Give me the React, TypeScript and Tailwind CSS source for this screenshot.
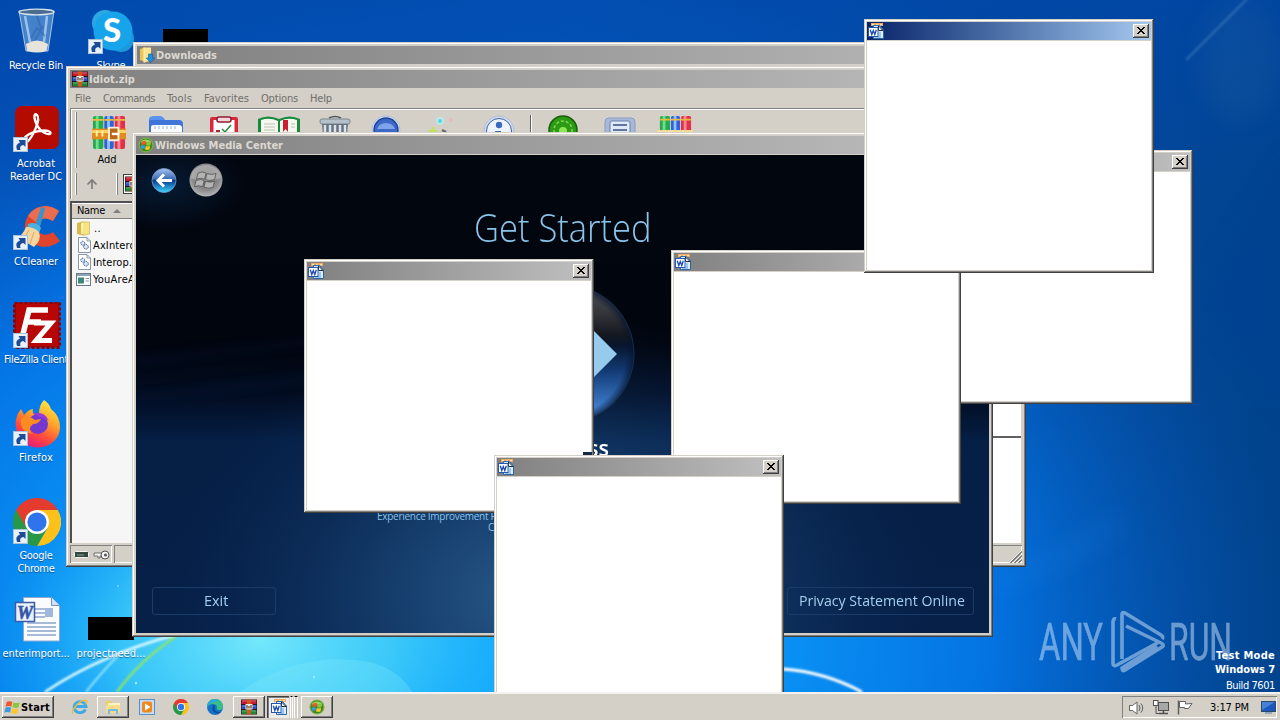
import React, { useLayoutEffect, useRef, useState } from "react";

type Box = { className?: string };

/* Text that is tracked so that it fills a given width. */
function Label({ w, className = "", children }: { w: number; className?: string; children: string }) {
  const ref = useRef<HTMLSpanElement>(null);
  const [spacing, setSpacing] = useState(0);
  useLayoutEffect(() => {
    const el = ref.current;
    if (el) setSpacing((w - el.getBoundingClientRect().width) / children.length);
  }, []);
  return (
    <span ref={ref} className={`inline-block shrink-0 whitespace-nowrap ${className}`} style={{ letterSpacing: spacing }}>
      {children}
    </span>
  );
}

/* Text whose glyphs are condensed to a given width. */
function Condensed({ w, className = "", children }: { w: number; className?: string; children: string }) {
  const ref = useRef<HTMLSpanElement>(null);
  const [scale, setScale] = useState(1);
  useLayoutEffect(() => {
    const el = ref.current;
    if (el) setScale(w / el.offsetWidth);
  }, []);
  return (
    <span className={`flex shrink-0 justify-start ${className}`} style={{ width: w }}>
      <span ref={ref} className="inline-block shrink-0 origin-left whitespace-nowrap" style={{ transform: `scaleX(${scale})` }}>
        {children}
      </span>
    </span>
  );
}

const frame =
  "bg-[#d4d0c8] shadow-[inset_-1px_-1px_#404040,inset_1px_1px_#d4d0c8,inset_-2px_-2px_#808080,inset_2px_2px_#fff]";
const raised = "bg-[#d4d0c8] shadow-[inset_-1px_-1px_#404040,inset_1px_1px_#fff,inset_-2px_-2px_#808080]";

/* ---------- small icons ---------- */

function WordSmall({ className = "h-4 w-4" }: Box) {
  return (
    <svg viewBox="0 0 16 16" className={className}>
      <rect x="3" y="0" width="12" height="3" fill="#f0a868" />
      <path d="M4 1.500h2M8 1.500h2M12 1.500h2" stroke="#ffe8b0" />
      <path d="M5.500 2.500h6l4 4.500v8.500h-10z" fill="#dcecfa" stroke="#2a66a8" />
      <path d="M10.500 3v4.500h4.500z" fill="#fff" stroke="#182838" strokeWidth="1" />
      <path d="M12 9v4M7 14h6" fill="none" stroke="#5aa0dc" />
      <rect x=".5" y="4.500" width="9.500" height="9" fill="#fff" stroke="#2458b4" />
      <path d="M2.300 6.800l1.500 4.700 1.500-4 1.500 4 1.500-4.700" fill="none" stroke="#1848b0" strokeWidth="1.300" />
    </svg>
  );
}

function WinRar({ className = "h-4 w-4" }: Box) {
  return (
    <svg viewBox="0 0 16 16" className={className}>
      <rect x="0" y="0.5" width="16" height="15" fill="#281414" />
      <rect x="0.5" y="1" width="15" height="4" fill="#c01c38" />
      <rect x="0.5" y="6" width="15" height="4" fill="#3450c0" />
      <rect x="0.5" y="11" width="15" height="4" fill="#1c8838" />
      <path d="M1 2h14M1 7h14M1 12h14" stroke="#fff" strokeOpacity=".3" />
      <rect x="6" y="0.5" width="4" height="15" fill="#d05818" />
      <rect x="4.500" y="5" width="7" height="5.500" fill="#f0e8dc" />
      <path d="M6 6v3.500M8 7v2.500M10 6v3.500" fill="none" stroke="#402010" />
    </svg>
  );
}

function FolderDown() {
  return (
    <svg viewBox="0 0 16 16" className="h-4 w-4">
      <path d="M1 2l4-1.500v14L1 13z" fill="#e9c456" />
      <path d="M5 .5h7v13l-7 2z" fill="#fbe391" />
      <path d="M5 .5v15" stroke="#fff6c8" />
      <path d="M9.500 7h4v4H16l-4.300 4.800L7.200 11h2.300z" fill="#1d8fe0" stroke="#0d5aa5" strokeWidth=".6" />
    </svg>
  );
}

function Flag({ x, y, s }: { x: number; y: number; s: number }) {
  return (
    <g transform={`translate(${x} ${y}) scale(${s})`}>
      <path d="M1 1.400C3 .4 5 .4 6.600 1.300L5.600 6C4 5.200 2 5.200 0 6z" fill="#f0552b" />
      <path d="M7.600 1.800c2 .9 4 .8 6.200 0L12.700 6.600c-2 .8-4 .7-6 0z" fill="#8cc63e" />
      <path d="M-.2 7c2-.9 4-.8 5.600.1L4.400 11.700c-2-.9-3.800-.8-5.700 0z" fill="#3b9ae0" />
      <path d="M6.400 7.600c2 .9 4 .8 6 0l-1 4.700c-2 .9-4 .7-6 0z" fill="#fcc52c" />
    </g>
  );
}

function MediaCenter({ className = "h-4 w-4" }: Box) {
  return (
    <svg viewBox="0 0 16 16" className={className}>
      <circle cx="8" cy="8" r="7.300" fill="#3c8a1c" />
      <circle cx="8" cy="8" r="7" fill="none" stroke="#8fbc58" />
      <path d="M2.500 5.500a6 5 0 0 1 11 0z" fill="#b9e27a" opacity=".8" />
      <Flag x={3.2} y={3.6} s={0.72} />
    </svg>
  );
}

function StartFlag() {
  return (
    <svg viewBox="0 0 16 15" className="h-[15px] w-4">
      <Flag x={1.6} y={0.6} s={1.02} />
    </svg>
  );
}

function ChromeLogo({ className = "" }: Box) {
  return (
    <svg viewBox="0 0 48 48" className={className}>
      <path d="M44.800 12H24v12l10.400 6L24 48a24 24 0 0 0 20.800-36z" fill="#fcc21b" />
      <path d="M3.200 12A24 24 0 0 0 24 48l10.400-18L24 24z" fill="#279847" />
      <path d="M3.200 12A24 24 0 0 1 44.800 12H24L13.600 30z" fill="#e33b2e" />
      <circle cx="24" cy="24" r="12" fill="#fff" />
      <circle cx="24" cy="24" r="9.600" fill="#2f74ea" />
    </svg>
  );
}

function Close() {
  return (
    <div className={`mr-0.5 flex h-3.5 w-4 items-center justify-center ${raised}`}>
      <svg viewBox="0 0 8 7" className="mb-px mr-px h-[7px] w-2" shapeRendering="crispEdges">
        <path d="M0 0h2v1h1v1h2v-1h1v-1h2v1h-1v1h-1v1h-1v1h1v1h1v1h1v1h-2v-1h-1v-1h-2v1h-1v1h-2v-1h1v-1h1v-1h1v-1h-1v-1h-1v-1h-1z" fill="#000" />
      </svg>
    </div>
  );
}

/* ---------- windows ---------- */

function Popup({ className, active = false }: { className: string; active?: boolean }) {
  return (
    <div className={`absolute flex h-[254px] w-[290px] flex-col gap-px p-[3px] ${frame} ${className}`}>
      <div
        className={`flex h-[18px] shrink-0 items-center justify-between pl-px ${
          active ? "bg-linear-to-r from-[#0a246a] to-[#a6caf0]" : "bg-linear-to-r from-[#808080] to-[#c0c0c0]"
        }`}
      >
        <WordSmall />
        <Close />
      </div>
      <div className="flex-1 bg-white" />
    </div>
  );
}

function TitleBar({ icon, title, w }: { icon: React.ReactNode; title: string; w: number }) {
  return (
    <div className="flex h-[18px] shrink-0 items-center gap-px bg-linear-to-r from-[#808080] to-[#c0c0c0] pl-0.5 text-[11px] font-bold leading-[14px] text-[#dcd8d0]">
      {icon}
      <Label w={w} className="pt-0.5">{title}</Label>
    </div>
  );
}

function Books({ className = "h-9 w-9", clasp = true }: Box & { clasp?: boolean }) {
  return (
    <svg viewBox="0 0 36 36" preserveAspectRatio="none" className={className}>
      <rect x="1" y="1" width="11" height="34" rx="2" fill="#28a850" />
      <rect x="4" y="1" width="3" height="34" fill="#6fe08a" />
      <rect x="13" y="1" width="10" height="34" rx="2" fill="#2d62d8" />
      <rect x="16" y="1" width="3" height="34" fill="#8fc0ff" />
      <rect x="24" y="1" width="11" height="34" rx="2" fill="#e0304c" />
      <rect x="27" y="1" width="3" height="34" fill="#ff8a90" />
      <path d="M1 5h11M13 5h10M24 5h11" stroke="#f0b83a" strokeWidth="2" />
      {clasp && (
        <g>
          <rect x="0" y="14" width="36" height="11" fill="#e08c20" />
          <path d="M0 17h36" stroke="#ffd060" strokeWidth="3" />
          <path d="M5 16v6M11 16v6" stroke="#fff0b0" strokeWidth="2" />
          <rect x="18" y="13" width="10" height="13" rx="1" fill="#b86818" stroke="#fff0d8" strokeWidth="2" />
          <path d="M21 19.500h8" stroke="#fff" strokeWidth="2.500" />
        </g>
      )}
    </svg>
  );
}

function Toolbar() {
  return (
    <div className="flex h-[62px] pl-1 pt-[3px]">
      <div className="h-14 w-0.5 border-l border-white bg-[#808080]" />
      <div className="ml-[14px] flex w-9 flex-col items-center pt-[3px] text-[11px] leading-[14px] text-black">
        <Books className="h-[35px] w-[34px] shrink-0" />
        <Label w={19} className="mr-1 mt-[3px]">Add</Label>
      </div>
      <div className="flex items-start pt-[3px]">
        <svg viewBox="0 0 38 20" className="ml-[20px] h-5 w-[38px]">
          <path d="M2 20V5q0-3 3-3h9l4 3h14q4 0 4 4v11z" fill="#3f74d8" />
          <path d="M2 5q0-4 5-4h6q3 0 5 4z" fill="#5a94f0" />
          <path d="M4 20V12q0-2 3-2h25q3 0 3 3v7z" fill="#f8fbff" />
          <path d="M8 11v3M12 11v3M16 11v3M20 11v3M24 11v3M28 11v3" stroke="#9ab0d8" />
        </svg>
        <svg viewBox="0 0 30 20" className="ml-6 h-5 w-[30px]">
          <rect x="1" y="2" width="28" height="26" rx="2" fill="#d8283c" />
          <rect x="4.500" y="5" width="21" height="20" fill="#fff" />
          <rect x="8" y="2" width="14" height="5" rx="2" fill="#f0d8dc" stroke="#8e1c2a" strokeWidth="1.500" />
          <path d="M13 14l3 3 6-7" fill="none" stroke="#1a8a3a" strokeWidth="1.500" />
          <path d="M7 16h4" stroke="#a02a2a" strokeWidth="2" />
        </svg>
        <svg viewBox="0 0 42 20" className="ml-[19px] h-5 w-[42px]">
          <path d="M0 20V4q10-5 21 0 11-5 21 0v16z" fill="#188a3c" />
          <path d="M3 20V5q9-3 17 1v14zM22 20V6q8-4 17-1v15z" fill="#f6f8f0" />
          <path d="M6 9h11M6 12h11M6 15h11M33 9h4M33 12h4" stroke="#b8c4b0" />
          <path d="M25 5h5v12l-2.500-3-2.500 3z" fill="#c82030" />
        </svg>
        <svg viewBox="0 0 32 20" className="ml-[19px] h-5 w-8">
          <path d="M10 3q6-3 12 0" fill="none" stroke="#4a545e" strokeWidth="1.500" />
          <rect x="1" y="4" width="30" height="5" rx="2" fill="#b4c0ca" stroke="#7a8690" />
          <path d="M3 9h26l-1 11H4z" fill="#667280" />
          <path d="M6 10v10M11 10v10M16 10v10M21 10v10M26 10v10" stroke="#dce4ea" strokeWidth="2.500" />
        </svg>
        <svg viewBox="0 0 30 20" className="ml-[20px] h-5 w-[30px]">
          <circle cx="15" cy="15" r="14" fill="#eef3fc" stroke="#a8b8d8" />
          <circle cx="15" cy="15" r="12" fill="#3c68c8" stroke="#1c4296" strokeWidth="1.500" />
          <path d="M6 14a9.500 9 0 0 1 18 0z" fill="#7ea4ec" />
        </svg>
        <svg viewBox="0 0 30 20" className="ml-[26px] h-5 w-[30px]">
          <circle cx="13" cy="6" r="4" fill="#b8e8ec" />
          <circle cx="13" cy="6" r="2" fill="#58d4e4" />
          <path d="M24 3v4M22 5h4" stroke="#f0b0c0" strokeWidth="1.500" />
          <path d="M6 12v8M2 16h8" stroke="#c4e060" strokeWidth="2.500" />
          <path d="M15 15l4 2" stroke="#686868" strokeWidth="2.500" />
        </svg>
        <svg viewBox="0 0 32 20" className="ml-[26px] h-5 w-8">
          <circle cx="16" cy="16" r="15" fill="#cfdcf0" stroke="#b0bfd8" />
          <circle cx="16" cy="16" r="12.500" fill="#eef4fe" stroke="#4460a0" />
          <circle cx="16" cy="10" r="3.200" fill="#3c68c0" />
          <path d="M12 16h6v4h-5" fill="#3c68c0" />
        </svg>
        <div className="ml-[15px] h-5 w-0.5 border-l border-[#606060] bg-white" />
        <svg viewBox="0 0 30 20" className="ml-4 h-5 w-[30px]">
          <circle cx="15" cy="15" r="14" fill="#2c9a14" stroke="#14600a" strokeWidth="1.500" />
          <circle cx="15" cy="15" r="9" fill="none" stroke="#7cd850" strokeWidth="1.500" strokeDasharray="3 2" />
          <circle cx="15" cy="16" r="4" fill="#8ee850" />
        </svg>
        <svg viewBox="0 0 32 20" className="ml-[26px] h-5 w-8">
          <rect x="1" y="3" width="30" height="26" rx="4" fill="#a8b8d8" stroke="#8c9cc0" />
          <rect x="6" y="6" width="20" height="20" rx="2" fill="#dfe9fa" stroke="#6880b0" />
          <path d="M9 10h14M9 15h14" stroke="#38507c" strokeWidth="1.500" />
        </svg>
        <div className="relative ml-[21px] flex h-5 w-9 flex-col items-center overflow-hidden">
          <Books className="h-[33px] w-[33px] shrink-0" clasp={false} />
          <div className="absolute inset-x-0 bottom-0 h-[5px] bg-[#f4dc9c]" />
        </div>
      </div>
    </div>
  );
}

function Gear() {
  return (
    <svg viewBox="0 0 13 16" className="h-4 w-[13px]">
      <path d="M.5.5h8.500l3.500 3.500v11.500H.5z" fill="#fff" stroke="#8898a8" />
      <path d="M9 .5v3.500h3.500" fill="none" stroke="#8898a8" />
      <circle cx="4.800" cy="6.200" r="2" fill="#d8e8f8" stroke="#305088" strokeDasharray="1.300 .6" />
      <circle cx="8" cy="9.800" r="2.300" fill="#d8e8f8" stroke="#305088" strokeDasharray="1.300 .6" />
    </svg>
  );
}

function ArchiveWindow() {
  const menu: [string, number][] = [["File", 16], ["Commands", 52], ["Tools", 25], ["Favorites", 45], ["Options", 37], ["Help", 22]];
  return (
    <div className={`absolute left-[66px] top-[66px] flex h-[501px] w-[960px] flex-col p-1 ${frame}`}>
      <TitleBar icon={<WinRar />} title="Idiot.zip" w={46} />
      <div className="flex h-5 shrink-0 items-center gap-3 pl-[5px] pt-0.5 text-[11px] text-[#706e6a]">
        {menu.map(([t, w]) => (
          <Label key={t} w={w}>{t}</Label>
        ))}
      </div>
      <div className="flex h-[91px] shrink-0 flex-col border-l border-t border-[#808080] shadow-[inset_1px_1px_#fff]">
        <Toolbar />
        <div className="flex h-[26px] items-center pl-1">
          <div className="h-[22px] w-0.5 border-l border-white bg-[#808080]" />
          <svg viewBox="0 0 12 12" className="ml-[9px] h-3 w-3">
            <path d="M6 11V2M1.500 6.500L6 2l4.500 4.500" fill="none" stroke="#7c7a76" strokeWidth="1.600" />
          </svg>
          <div className="ml-[18px] h-[22px] w-0.5 border-l border-white bg-[#808080]" />
          <div className="ml-[5px] flex h-5 w-6 items-center border border-[#404040] bg-white pl-px"><WinRar /></div>
        </div>
      </div>
      <div className="mt-0.5 flex h-[342px] shrink-0 border-l-2 border-t-2 border-[#505050]">
        <div className="w-[900px] bg-[#f6f6f6] text-[11px] text-black">
          <div className="flex h-4 items-center border-b border-[#808080] bg-[#d4d0c8] pl-[5px] pt-0.5 shadow-[inset_0_1px_#fff]">
            <Label w={28}>Name</Label>
            <svg viewBox="0 0 8 4" className="mb-0.5 ml-2 h-1 w-2"><path d="M0 4l4-4 4 4z" fill="#808080" /></svg>
          </div>
          <div className="flex h-[17px] items-center gap-1 pl-[5px] pt-px">
            <svg viewBox="0 0 13 15" className="h-[15px] w-[13px]">
              <path d="M0 2l6-1.500v14L0 13z" fill="#d8b848" /><path d="M4 1h8.500v12L6 14.500z" fill="#f6e480" stroke="#c8a840" strokeWidth=".6" /><path d="M5 2v11" stroke="#fffbd0" strokeWidth="1.500" />
            </svg>
            <Label w={7} className="pt-0.5">..</Label>
          </div>
          <div className="flex h-[17px] items-center gap-0.5 pl-1.5 pt-px"><Gear /><Label w={49} className="pt-0.5">AxInterop</Label></div>
          <div className="flex h-[17px] items-center gap-0.5 pl-1.5 pt-px"><Gear /><Label w={39} className="pt-0.5">Interop.</Label></div>
          <div className="flex h-[17px] items-center gap-0.5 pl-1 pt-px">
            <svg viewBox="0 0 15 13" className="h-[13px] w-[15px]">
              <rect x=".5" y=".5" width="14" height="12" fill="#fff" stroke="#68788c" /><path d="M1 2h13" stroke="#90a4b8" strokeWidth="2" /><rect x="2" y="4.500" width="6" height="6" fill="#3c8878" /><path d="M9.500 5.500h3.500M9.500 8h3.500" stroke="#8098a8" />
            </svg>
            <Label w={42} className="pt-0.5">YouAreA</Label>
          </div>
        </div>
        <div className="flex flex-1 flex-col bg-white pt-[233px]">
          <div className="h-0.5 bg-[#606060]" />
        </div>
        <div className="w-px bg-[#d4d0c8]" />
      </div>
      <div className="mt-0.5 flex flex-1 gap-0.5 text-[#808080]">
        <div className="flex w-[42px] items-center gap-1 border-l border-t border-[#808080] pl-[3px] shadow-[inset_-1px_-1px_#fff]">
          <svg viewBox="0 0 15 7" className="h-[7px] w-[15px]"><rect x=".5" y=".5" width="14" height="6" rx="1" fill="#354840" stroke="#f4f4f4" /><path d="M3 4h7" stroke="#8fa098" /></svg>
          <svg viewBox="0 0 17 10" className="h-2.5 w-[17px]"><path d="M1 3h9v3H7v2H5V6H1z" fill="#f4f4f4" stroke="#606060" strokeWidth=".9" /><circle cx="12" cy="5" r="4" fill="#f4f4f4" stroke="#505050" /><circle cx="12.500" cy="5" r="1.500" fill="#505050" /></svg>
        </div>
        <div className="flex flex-1 items-end justify-end border-l border-t border-[#808080] shadow-[inset_-1px_-1px_#fff]">
          <svg viewBox="0 0 13 13" className="h-[13px] w-[13px]"><path d="M0 13L13 0M4 13l9-9M8 13l5-5" stroke="#fff" /><path d="M1.500 13L13 1.500M5.500 13L13 5.500M9.500 13L13 9.500" stroke="#707070" strokeWidth="1.300" /></svg>
        </div>
      </div>
    </div>
  );
}

function MediaWindow() {
  return (
    <div className={`absolute left-[132px] top-[132px] flex h-[505px] w-[861px] flex-col gap-px p-1 ${frame}`}>
      <TitleBar icon={<MediaCenter />} title="Windows Media Center" w={128} />
      <div className="relative flex flex-1 flex-col overflow-hidden bg-[#01050f] font-['Open_Sans',sans-serif] text-[#8ac4ea]">
        <svg viewBox="0 0 853 478" preserveAspectRatio="none" className="absolute inset-0 h-full w-full">
          <defs>
            <linearGradient id="mc" x1="0" y1="0" x2="0" y2="1">
              <stop offset="0" stopColor="#02060f" />
              <stop offset=".4" stopColor="#01050e" />
              <stop offset=".5" stopColor="#020c20" />
              <stop offset=".6" stopColor="#051f45" />
              <stop offset="1" stopColor="#062048" />
            </linearGradient>
            <radialGradient id="mg" gradientUnits="userSpaceOnUse" cx="0" cy="0" r="1" gradientTransform="translate(415 440) scale(390 280)">
              <stop offset="0" stopColor="#2e6290" stopOpacity=".95" />
              <stop offset=".4" stopColor="#205286" stopOpacity=".6" />
              <stop offset="1" stopColor="#0c2c5c" stopOpacity="0" />
            </radialGradient>
            <radialGradient id="mt" gradientUnits="userSpaceOnUse" cx="0" cy="0" r="1" gradientTransform="translate(30 30) scale(80 45)">
              <stop offset="0" stopColor="#0b3058" stopOpacity=".5" />
              <stop offset="1" stopColor="#0b3058" stopOpacity="0" />
            </radialGradient>
            <filter id="mb"><feGaussianBlur stdDeviation="5" /></filter>
          </defs>
          <rect width="853" height="478" fill="url(#mc)" />
          <rect width="853" height="478" fill="url(#mg)" />
          <rect width="853" height="478" fill="url(#mt)" />
          <path d="M0 206L180 186M0 244L180 222" stroke="#0a2450" strokeWidth="8" opacity=".2" filter="url(#mb)" />
        </svg>
        <div className="relative flex h-[51px] items-center gap-3 pl-[15px]">
          <svg viewBox="0 0 26 26" className="h-[26px] w-[26px]">
            <defs>
              <linearGradient id="bk" x1="0" y1="0" x2="0" y2="1">
                <stop offset="0" stopColor="#a4c4ee" /><stop offset=".45" stopColor="#3868b4" /><stop offset=".5" stopColor="#0c3890" /><stop offset="1" stopColor="#38d8ff" />
              </linearGradient>
            </defs>
            <circle cx="13" cy="12.500" r="12" fill="url(#bk)" stroke="#7898c8" strokeWidth=".8" />
            <path d="M21 12.500H8M13 6.500L7 12.500l6 6" fill="none" stroke="#fff" strokeWidth="3" />
          </svg>
          <svg viewBox="0 0 34 34" className="mb-0.5 h-[34px] w-[34px]">
            <defs>
              <radialGradient id="orb" cx=".5" cy=".4" r=".6">
                <stop offset="0" stopColor="#6c6c6c" /><stop offset=".7" stopColor="#8c8c8c" /><stop offset="1" stopColor="#b8b8b8" />
              </radialGradient>
            </defs>
            <circle cx="17" cy="17" r="16.500" fill="url(#orb)" />
            <path d="M2 15a15 13 0 0 1 30 0q-15 6-30 0z" fill="#c8c8c8" opacity=".5" />
            <g fill="#b4b4b4" stroke="#484848" strokeWidth=".7">
              <path d="M9 10q4-2 8 0l-1.500 6.200q-4-2-8 0zM18 10.500q4.500 2 9 0l-1.500 6q-4.500 2-9 0zM7 17.500q4.500-2 8.200 0l-1.500 6.200q-4-2-8.200 0zM16.500 18.200q4.500 2 9 0l-1.500 6q-4 2-9 0z" />
            </g>
          </svg>
        </div>
        <div className="relative flex h-[44px] items-center justify-center pb-[3px] text-[38px] font-light leading-[44px]">
          <Condensed w={178}>Get Started</Condensed>
        </div>
        <div className="relative mt-[34px] flex justify-center pl-1">
          <svg viewBox="0 0 140 140" className="h-[140px] w-[140px]">
            <defs>
              <linearGradient id="pl" x1="0" y1="0" x2="0" y2="1">
                <stop offset="0" stopColor="#50525a" /><stop offset=".2" stopColor="#34363c" /><stop offset=".36" stopColor="#15181f" /><stop offset=".44" stopColor="#07162f" /><stop offset=".62" stopColor="#123a74" /><stop offset=".9" stopColor="#4080d0" />
              </linearGradient>
              <radialGradient id="pe" cx=".5" cy=".5" r=".5">
                <stop offset=".88" stopColor="#06142c" stopOpacity="0" /><stop offset="1" stopColor="#06142c" stopOpacity=".7" />
              </radialGradient>
            </defs>
            <circle cx="70" cy="70" r="69" fill="url(#pl)" />
            <circle cx="70" cy="70" r="69" fill="url(#pe)" stroke="#142c50" />
            <path d="M74 22l48 48-48 48z" fill="#96cbee" />
          </svg>
        </div>
        <div className="relative mt-[10px] flex h-7 justify-end pr-[380px] text-[21px] font-semibold leading-7 text-white">
          <Condensed w={80}>Express</Condensed>
        </div>
        <div className="relative mt-[49px] flex flex-col items-start pl-[241px] text-[10px] leading-[11px]">
          <Label w={152}>Experience Improvement Program</Label>
          <span className="pl-[111px]">Customer</span>
        </div>
        <div className="relative mb-[18px] mt-auto flex items-center justify-between pl-4 pr-[15px] text-[15px] text-[#a4cfee]">
          <div className="flex h-7 w-[124px] items-center justify-center rounded-[3px] border border-[#1b3c68] pb-0.5 pl-1">
            <Condensed w={24}>Exit</Condensed>
          </div>
          <div className="flex h-7 w-[187px] items-center justify-center rounded-[3px] border border-[#1b3c68] pb-0.5 pl-[3px]">
            <Condensed w={166}>Privacy Statement Online</Condensed>
          </div>
        </div>
      </div>
    </div>
  );
}

/* ---------- desktop ---------- */

function Shortcut() {
  return (
    <svg viewBox="0 0 15 15" className="absolute bottom-0.5 left-0 h-[15px] w-[15px]">
      <rect x=".5" y=".5" width="14" height="14" fill="#e8f1fa" stroke="#a8c0d8" />
      <path d="M4 13Q1.500 7.500 7 5.500L5.500 3H12.500V10L10.500 8Q6 8.500 7.500 13z" fill="#1c4c98" />
    </svg>
  );
}

function DesktopIcon({ lines, art, shortcut = true }: { lines: [string, number][]; art: React.ReactNode; shortcut?: boolean }) {
  return (
    <div className="flex h-[98px] w-[75px] shrink-0 flex-col items-center gap-[3px] pt-2 text-[11px] leading-[13px] text-white">
      <div className="relative flex h-12 w-12 shrink-0 items-center justify-center">
        {art}
        {shortcut && <Shortcut />}
      </div>
      <div className="-ml-px flex flex-col items-center [text-shadow:0_1px_1px_rgba(0,40,90,.6)]">
        {lines.map(([t, w]) => <Label key={t} w={w}>{t}</Label>)}
      </div>
    </div>
  );
}

function Wallpaper() {
  return (
    <svg viewBox="0 0 1280 692" className="absolute inset-0 h-full w-full">
      <defs>
        <linearGradient id="wb" x1="0" y1="0" x2="1" y2="0">
          <stop offset="0" stopColor="#0450b8" /><stop offset=".45" stopColor="#0660c8" /><stop offset=".75" stopColor="#044ea6" /><stop offset="1" stopColor="#01438c" />
        </linearGradient>
        <linearGradient id="wt" x1="0" y1="0" x2="0" y2="1">
          <stop offset="0" stopColor="#0046a8" stopOpacity=".7" /><stop offset="1" stopColor="#0046a8" stopOpacity="0" />
        </linearGradient>
        <radialGradient id="w1" gradientUnits="userSpaceOnUse" cx="0" cy="0" r="1" gradientTransform="translate(420 640) scale(870 640)">
          <stop offset="0" stopColor="#1cb4ff" /><stop offset=".3" stopColor="#0ca0fc" /><stop offset=".65" stopColor="#0478ea" stopOpacity=".9" /><stop offset="1" stopColor="#0454b4" stopOpacity="0" />
        </radialGradient>
        <radialGradient id="w2" gradientUnits="userSpaceOnUse" cx="0" cy="0" r="1" gradientTransform="translate(260 640) scale(270 190)">
          <stop offset="0" stopColor="#74e8fc" /><stop offset=".5" stopColor="#40ccf8" stopOpacity=".85" /><stop offset="1" stopColor="#18a8f8" stopOpacity="0" />
        </radialGradient>
        <filter id="soft" x="-20%" y="-20%" width="140%" height="140%"><feGaussianBlur stdDeviation="1.200" /></filter>
        <filter id="haze" x="-60%" y="-60%" width="220%" height="220%"><feGaussianBlur stdDeviation="12" /></filter>
      </defs>
      <rect width="1280" height="692" fill="url(#wb)" />
      <rect width="1280" height="692" fill="url(#w1)" />
      <rect width="1280" height="692" fill="url(#w2)" />
      <rect width="1280" height="220" fill="url(#wt)" />
      <path d="M1300 150L1200 300 1300 420z" fill="#003f94" opacity=".5" filter="url(#haze)" />
      <ellipse cx="1240" cy="60" rx="40" ry="60" fill="#2464a0" opacity=".25" filter="url(#haze)" />
      <path d="M1248 -2L1186 60" fill="none" stroke="#6c9cd0" strokeWidth="2" opacity=".4" filter="url(#soft)" />
      <path d="M992 582Q1070 560 1120 520" fill="none" stroke="#2c94f8" strokeWidth="12" opacity=".2" filter="url(#haze)" />
      <path d="M240 692Q300 650 370 662 400 670 412 692z" fill="#8cf0fc" opacity=".25" />
      <g fill="none" filter="url(#soft)">
        <path d="M45 692Q100 655 175 635" stroke="#e4fcff" strokeWidth="2.500" />
        <path d="M86 692Q105 668 122 652" stroke="#b8f4ff" strokeWidth="1.500" />
        <path d="M117 692Q140 660 178 635" stroke="#8ce468" strokeWidth="2.500" />
        <path d="M783 669Q825 672 862 692" stroke="#fff" strokeWidth="3" />
      </g>
      <g fill="#e0fcff" opacity=".7"><circle cx="136" cy="683" r="1.200" /><circle cx="118" cy="586" r=".8" /><circle cx="314" cy="677" r="1" /></g>
    </svg>
  );
}

function WordFile() {
  return (
    <svg viewBox="0 0 48 48" className="h-12 w-12">
      <path d="M10.500 1.500h28l8 8v35.500H10.500z" fill="#fafcff" stroke="#90a8d0" />
      <path d="M38.500 1.500v8h8" fill="#d4e2f6" stroke="#7090c0" />
      <path d="M22 13h10M22 17h10M22 21h10M14 27h29M14 31h29M14 35h29M14 39h29" stroke="#8ca4cc" strokeWidth="1.300" />
      <rect x="32" y="12" width="8" height="9" fill="#a0b8dc" />
      <rect x="2.500" y="6.500" width="19" height="19" fill="#e9effb" stroke="#3c5ca8" strokeWidth="1.500" />
      <text x="12" y="22.500" textAnchor="middle" fontFamily="Liberation Serif" fontStyle="italic" fontWeight="700" fontSize="18" stroke="#3455a4" strokeWidth=".6" fill="#3455a4">W</text>
    </svg>
  );
}

function DesktopIcons() {
  return (
    <div className="absolute -left-px top-0 flex">
      <div className="flex w-[75px] flex-col">
        <DesktopIcon shortcut={false} lines={[["Recycle Bin", 54]]} art={
          <svg viewBox="0 0 48 48" className="h-12 w-12">
            <path d="M6 3L41 3 35 43H13z" fill="#7aaee0" fillOpacity=".55" stroke="#c8dcf0" strokeWidth=".8" />
            <path d="M13 36q11-7 22 0l-1.500 7q-9 3-19.500 0z" fill="#e8e4dc" />
            <path d="M12 8l5 26M34 8l-3 26" stroke="#d8ecff" strokeWidth="2.500" opacity=".6" />
            <path d="M24 8l4 12M18 30l6-10 8 8M30 18l-8 14" fill="none" stroke="#2c60b0" strokeWidth="2" opacity=".5" />
            <ellipse cx="23.500" cy="4" rx="17.500" ry="2.800" fill="#4c6c90" stroke="#d8e4ee" strokeWidth="1.300" />
          </svg>} />
        <DesktopIcon lines={[["Acrobat", 38], ["Reader DC", 52]]} art={
          <svg viewBox="0 0 48 48" className="h-12 w-12">
            <rect x="2" y="0" width="44" height="43" rx="7" fill="#b40b00" />
            <path d="M11 33C15 25 34 23 37 26 40 30 28 29 23 17 20 9 22 7 24 9 28 13 20 31 14 36 11 38 9 36 11 33z" fill="none" stroke="#fff" strokeWidth="2.400" />
          </svg>} />
        <DesktopIcon lines={[["CCleaner", 44]]} art={
          <svg viewBox="0 0 48 48" className="h-12 w-12">
            <path d="M46 7C30-5 11 7 12 24 13 43 34 48 47 37L40 28C33 33 25 31 24 23 24 14 34 11 40 17z" fill="#e0442a" />
            <path d="M46 7C34-2 20 3 15 12L24 19Q30 11 40 17z" fill="#ec6c50" />
            <path d="M28 3l4 1.500-6 22-5-2z" fill="#3894cc" /><path d="M15 20q8-3 13 4l-2 5-12-4z" fill="#4fb2dc" />
            <path d="M13 23q8 0 13 5 3 8-5 15Q10 36 2 36q8-5 11-13z" fill="#f4d6a0" /><path d="M16 26l-6 10M21 28l-4 12" stroke="#d8a868" />
          </svg>} />
        <DesktopIcon lines={[["FileZilla Client", 64]]} art={
          <svg viewBox="0 0 48 48" className="h-12 w-12">
            <rect x="1.500" y=".5" width="45" height="45" fill="#b40404" stroke="#8c0000" strokeWidth="3" strokeDasharray="3 2" />
            <rect x="3" y="2" width="42" height="42" fill="#b80606" />
            <path d="M10 32L16 8H35M14 20H28" fill="none" stroke="#fff" strokeWidth="5.500" />
            <path d="M21 21H38L23 38.500H39" fill="none" stroke="#fff" strokeWidth="5" />
          </svg>} />
        <DesktopIcon lines={[["Firefox", 34]]} art={
          <svg viewBox="0 0 48 48" className="h-12 w-12">
            <defs><linearGradient id="fx" x1=".8" y1="0" x2=".3" y2="1"><stop offset="0" stopColor="#fff044" /><stop offset=".4" stopColor="#ffa22a" /><stop offset=".7" stopColor="#ff4a3c" /><stop offset="1" stopColor="#e01880" /></linearGradient></defs>
            <path d="M31 0Q36 3 38 9q9 7 9 18A22 20 0 0 1 3 28Q1 18 8 9l3 6q5-6 9-6-1 4 2 6l4-1Q26 5 31 0z" fill="url(#fx)" />
            <circle cx="25" cy="24" r="10" fill="#7238d0" />
            <path d="M8 18q9-3 14 2l6-1q-2 5-8 5-6 5 0 10-14-2-12-16z" fill="#ff8c20" />
            <path d="M20 13q12-2 16 8-4-4-10-4z" fill="#9c38d8" />
          </svg>} />
        <DesktopIcon lines={[["Google", 33], ["Chrome", 37]]} art={<ChromeLogo className="h-12 w-12" />} />
        <DesktopIcon shortcut={false} lines={[["enterimport...", 67]]} art={<WordFile />} />
      </div>
      <div className="flex w-[74px] flex-col justify-between">
        <DesktopIcon lines={[["Skype", 29]]} art={
          <svg viewBox="0 0 48 48" className="h-12 w-12">
            <circle cx="17" cy="15" r="13" fill="#2ca8e4" /><circle cx="33" cy="31" r="13" fill="#1c98dc" /><circle cx="25" cy="23" r="19.500" fill="#18a4ea" />
            <text x="24" y="34" textAnchor="middle" fontFamily="Lato" fontWeight="900" fontSize="33" fill="#fff">S</text>
          </svg>} />
        <DesktopIcon shortcut={false} lines={[["projectneed...", 69]]} art={<div className="mr-0.5 mt-[17px] h-[23px] w-[46px] bg-black" />} />
      </div>
      <div className="flex pl-[15px] pt-[29px]"><div className="h-6 w-[45px] bg-black" /></div>
    </div>
  );
}

function Watermark() {
  return (
    <div className="absolute bottom-0 right-0 flex h-[90px] w-[250px] flex-col items-end justify-end pr-[5px] text-[11px] text-white">
      <svg viewBox="0 0 194 64" className="absolute left-[9px] top-2 h-16 w-[194px]" opacity=".5">
        <g fill="#d4e6fa" stroke="#d4e6fa" strokeWidth=".5" fontFamily="Roboto" fontWeight="400" fontSize="52">
          <text x="0" y="50" textLength="64" lengthAdjust="spacingAndGlyphs">ANY</text>
          <text x="130" y="50" textLength="63" lengthAdjust="spacingAndGlyphs">RUN</text>
        </g>
        <g fill="none" stroke="#d4e6fa" strokeWidth="3.600" strokeLinejoin="round">
          <path d="M83 49V4.500q0-3 3-1.500l36 22q3 2 1 4" />
          <path d="M77 9q-3-1-3 3v41q0 4 4 2l42-23" />
          <path d="M87 16l35 17q4 2 1 4L86 60q-3 2-3-2l35-22" />
        </g>
      </svg>
      <Label w={59} className="relative font-bold leading-[13px]">Test Mode</Label>
      <Label w={60} className="relative mt-px font-bold leading-[13px]">Windows 7</Label>
      <Label w={49} className="relative mt-[3px] leading-[13px]">Build 7601</Label>
    </div>
  );
}

function Taskbar() {
  return (
    <div className="relative flex h-7 shrink-0 items-center bg-[#d4d0c8] pl-0.5 pr-[3px] pt-0.5 text-[11px] text-black shadow-[inset_0_2px_#f4f2ee]">
      <div className={`flex h-[22px] w-[52px] items-center gap-px pl-0.5 ${raised}`}>
        <StartFlag />
        <Label w={29} className="pt-0.5 font-bold">Start</Label>
      </div>
      <svg viewBox="0 0 17 16" className="ml-[17px] h-4 w-[17px]">
        <path d="M14.500 10.500A6 5.500 0 1 1 15 7.500H5" fill="none" stroke="#3caae8" strokeWidth="2.800" />
        <path d="M2 14.500C-1 12 9 0 15 1.500 17 2 15 5 14.500 5.500" fill="none" stroke="#f0bc30" strokeWidth="1.300" />
      </svg>
      <div className={`ml-[9px] flex h-[22px] w-8 items-center justify-center ${raised}`}>
        <svg viewBox="0 0 16 16" className="h-4 w-4"><path d="M1 2h6l1 2h7v10H1z" fill="#f0cc68" /><path d="M3 4h12v8H3z" fill="#fff4c4" /><path d="M1 6h14v8H1z" fill="#f8de88" /><path d="M3 15v-4q0-1 1-1h8q1 0 1 1v4h-2v-3H5v3z" fill="#78b8e8" /></svg>
      </div>
      <svg viewBox="0 0 16 16" className="ml-[10px] h-4 w-4"><rect x=".5" y=".5" width="15" height="15" fill="#c4dcf4" stroke="#5890c8" /><rect x="3" y="2.500" width="10" height="11" rx="2" fill="#f08820" /><path d="M6 4.500l5.500 3.500L6 11.500z" fill="#fff" /></svg>
      <ChromeLogo className="ml-[18px] h-4 w-4" />
      <svg viewBox="0 0 16 16" className="ml-[18px] h-4 w-4"><circle cx="8" cy="8" r="8" fill="#1374c8" /><path d="M0 8a8 8 0 0 1 16-.5Q16 11 12 11q-3 0-2-2 0-4-4-4-4 0-6 3z" fill="#38c088" /><path d="M0 8a8 8 0 0 1 13-6Q5 1 0 8z" fill="#28a8e0" /><path d="M6 6q-2 6 3 8.500 3 .5 5-2-5 1.500-6.500-2.500Q7 8 8 6.500z" fill="#0c4c98" /></svg>
      <div className={`ml-[10px] flex h-[22px] w-8 items-center justify-center ${raised}`}><WinRar /></div>
      <div className="ml-[2px] flex h-[22px] w-[31px] items-center">
        <div className="flex h-[22px] w-[22px] items-center bg-[#ecebe7] pl-1 shadow-[inset_1px_1px_#404040,inset_2px_2px_#808080]"><WordSmall /></div>
        <div className="ml-px h-[22px] w-[3px] border-x border-t border-x-white border-t-black" />
        <div className="ml-px h-[22px] w-[4px] border-x border-t border-x-white border-t-black" />
      </div>
      <div className={`ml-[3px] flex h-[22px] w-8 items-center justify-center ${raised}`}><MediaCenter /></div>
      <div className="ml-auto flex h-[22px] w-[155px] items-center border-l border-t border-[#808080] pl-1.5 shadow-[inset_-1px_-1px_#fff]">
        <svg viewBox="0 0 16 14" className="h-3.5 w-4"><path d="M.5 4.500h3L8 1v12L3.500 9.500h-3z" fill="#fff" stroke="#606060" /><path d="M10 4q2 3 0 6M12 2.500q3.500 4.500 0 9" fill="none" stroke="#606060" /></svg>
        <svg viewBox="0 0 17 15" className="ml-2 h-[15px] w-[17px]"><rect x="5.500" y="2.500" width="10" height="8" fill="#a8a8a8" stroke="#505050" /><path d="M6 13.500h9M10.500 11v2" stroke="#505050" strokeWidth="1.500" /><path d="M1.500.500v5h1.500v8h3" fill="none" stroke="#505050" /><rect x=".5" y=".5" width="4.500" height="5" fill="#fff" stroke="#505050" /></svg>
        <svg viewBox="0 0 16 15" className="ml-[7px] h-[15px] w-4"><path d="M1.500.500v14" stroke="#606060" strokeWidth="1.500" /><path d="M2.500 1.500h6v2.500l6.500-.5-3.500 5h-4v-1h-5z" fill="#fff" stroke="#606060" /></svg>
        <Label w={39} className="ml-[17px] pt-0.5">3:17 PM</Label>
        <svg viewBox="0 0 15 13" className="ml-3 h-[13px] w-[15px]"><rect x=".5" y=".5" width="14" height="10" fill="#1858c0" stroke="#304868" /><path d="M1 1h13L1 9z" fill="#4880d8" /><path d="M4 12h7" stroke="#7898b8" strokeWidth="1.500" /></svg>
      </div>
    </div>
  );
}

export default function App() {
  return (
    <div className="flex h-screen w-screen flex-col overflow-hidden font-['DejaVu_Sans_Condensed','DejaVu_Sans',sans-serif]">
      <div className="relative flex-1 overflow-hidden">
        <Wallpaper />
        <DesktopIcons />
        <Watermark />
        <div className={`absolute left-[133px] top-[42px] flex h-[300px] w-[960px] flex-col p-1 ${frame}`}>
          <TitleBar icon={<FolderDown />} title="Downloads" w={61} />
        </div>
        <ArchiveWindow />
        <MediaWindow />
        <Popup className="left-[304px] top-[259px]" />
        <div className="absolute left-[583px] top-[452px] h-[3px] w-[9px] bg-[#14294c]" />
        <Popup className="left-[903px] top-[150px]" />
        <Popup className="left-[671px] top-[250px]" />
        <Popup className="left-[494px] top-[455px]" />
        <Popup active className="left-[864px] top-[19px]" />
      </div>
      <Taskbar />
    </div>
  );
}
